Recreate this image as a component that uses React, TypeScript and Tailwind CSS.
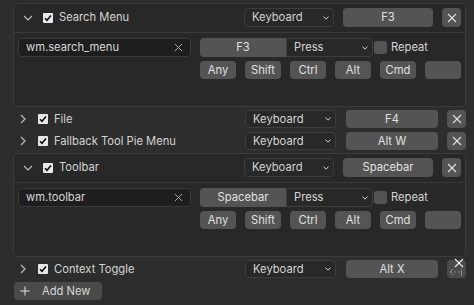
import React from "react";

const font = { fontFamily: "Inter, 'Noto Sans', sans-serif" };

function ChevronDown() {
  return (
    <svg width="10" height="6" viewBox="0 0 10 6" className="block">
      <polyline points="1,1 5,5 9,1" fill="none" stroke="#bdbdbd" strokeWidth="1.2" />
    </svg>
  );
}

function ChevronRight() {
  return (
    <svg width="6" height="10" viewBox="0 0 6 10" className="block">
      <polyline points="1,1 5,5 1,9" fill="none" stroke="#bdbdbd" strokeWidth="1.2" />
    </svg>
  );
}

function SmallChevron() {
  return (
    <svg width="6" height="4" viewBox="0 0 6 4" className="block">
      <polyline points="0.5,0.5 3,3.2 5.5,0.5" fill="none" stroke="#d0d0d0" strokeWidth="1" />
    </svg>
  );
}

function XIcon({ size = 9, color = "#d6d6d6" }: { size?: number; color?: string }) {
  return (
    <svg width={size} height={size} viewBox="0 0 10 10" className="block">
      <line x1="1" y1="1" x2="9" y2="9" stroke={color} strokeWidth="1.1" />
      <line x1="9" y1="1" x2="1" y2="9" stroke={color} strokeWidth="1.1" />
    </svg>
  );
}

function Check() {
  return (
    <div className="w-[10px] h-[10px] bg-[#e8e8e8] rounded-[1px] flex items-center justify-center">
      <svg width="8" height="8" viewBox="0 0 8 8" className="block">
        <polyline points="1,4.2 3,6.3 7,1.5" fill="none" stroke="#111" strokeWidth="1.6" />
      </svg>
    </div>
  );
}

function Dropdown({ w, label }: { w: string; label: string }) {
  return (
    <div
      className={`${w} h-full bg-[#282828] border border-[#3d3d3d] rounded-[4px] flex items-center pl-[7px] pr-[4px] text-[11.2px] text-[#d4d4d4]`}
    >
      <span className="flex-1">{label}</span>
      <SmallChevron />
    </div>
  );
}

function Btn({ w, label }: { w: string; label: string }) {
  return (
    <div
      className={`${w} h-full bg-[#545454] rounded-[4px] flex items-center justify-center text-[11.2px] text-[#e0e0e0]`}
    >
      {label}
    </div>
  );
}

function XBtn() {
  return (
    <div className="w-[19px] h-full bg-[#545454] rounded-[4px] flex items-center justify-center">
      <XIcon size={10} color="#e0e0e0" />
    </div>
  );
}

function CollapsedRow({ label, keyLabel, cursor }: { label: string; keyLabel: string; cursor?: boolean }) {
  return (
    <div className="h-[18px] flex items-center">
      <div className="w-[20px] flex justify-center">
        <ChevronRight />
      </div>
      <div className="ml-[5px]">
        <Check />
      </div>
      <span className="ml-[6px] text-[11.2px] text-[#d4d4d4]">{label}</span>
      <div className="ml-auto flex h-full items-stretch">
        <Dropdown w="w-[91px]" label="Keyboard" />
        <div className="w-[10px]" />
        <Btn w="w-[92px]" label={keyLabel} />
        <div className="w-[9px]" />
        {cursor ? (
          <div className="w-[19px] h-full bg-[#4a4a4a] rounded-[4px] relative">
            <div className="absolute left-[7px] top-[-2px]">
              <XIcon size={10} color="#f0f0f0" />
            </div>
            <svg width="16" height="8" viewBox="0 0 16 8" className="absolute left-[2px] top-[8px]">
              <polyline points="4,1 1,4 4,7" fill="none" stroke="#8a8a8a" strokeWidth="1" />
              <line x1="1" y1="4" x2="3" y2="4" stroke="#8a8a8a" strokeWidth="1" />
              <line x1="5" y1="4" x2="7" y2="4" stroke="#8a8a8a" strokeWidth="1" />
              <line x1="9" y1="4" x2="11" y2="4" stroke="#8a8a8a" strokeWidth="1" />
              <line x1="12.5" y1="1" x2="12.5" y2="8" stroke="#8a8a8a" strokeWidth="1" />
            </svg>
          </div>
        ) : (
          <XBtn />
        )}
      </div>
    </div>
  );
}

function ExpandedBox({ label, keyLabel, op }: { label: string; keyLabel: string; op: string }) {
  return (
    <div className="h-[104px] border border-[#3c3c3c] rounded-[5px] bg-[#282828] flex flex-col">
      <div className="h-[29px] px-[4px] pt-[4px] pb-[5px] border-b border-[#3a3a3a] flex items-center">
        <div className="w-[20px] flex justify-center">
          <ChevronDown />
        </div>
        <div className="ml-[5px]">
          <Check />
        </div>
        <span className="ml-[6px] text-[11.2px] text-[#d4d4d4]">{label}</span>
        <div className="ml-auto flex h-[19px] items-stretch">
          <Dropdown w="w-[90px]" label="Keyboard" />
          <div className="w-[9px]" />
          <Btn w="w-[90px]" label={keyLabel} />
          <div className="w-[9px]" />
          <XBtn />
        </div>
      </div>
      <div className="px-[4px] pt-[5px] flex">
        <div className="w-[173px] h-[19px] bg-[#1e1e1e] border border-[#3a3a3a] rounded-[4px] flex items-center pl-[7px] pr-[7px] text-[11.2px] text-[#d6d6d6]">
          <span className="flex-1">{op}</span>
          <XIcon size={9} color="#a8a8a8" />
        </div>
        <div className="ml-[9px] w-[261px] flex flex-col gap-[4px]">
          <div className="h-[19px] flex items-center">
            <div className="w-[86px] h-full bg-[#545454] rounded-l-[4px] flex items-center justify-center text-[11.2px] text-[#e0e0e0]">
              {keyLabel}
            </div>
            <div className="w-[87px] h-full bg-[#282828] border border-[#3d3d3d] rounded-r-[4px] flex items-center pl-[7px] pr-[4px] text-[11.2px] text-[#d4d4d4]">
              <span className="flex-1">Press</span>
              <SmallChevron />
            </div>
            <div className="ml-[1px] w-[13px] h-[13px] bg-[#545454] rounded-[3px]" />
            <span className="ml-[4px] text-[11.2px] text-[#d4d4d4]">Repeat</span>
          </div>
          <div className="h-[18px] flex gap-[9px]">
            {["Any", "Shift", "Ctrl", "Alt", "Cmd", ""].map((m, i) => (
              <div
                key={i}
                className="w-[36px] h-full bg-[#545454] rounded-[4px] flex items-center justify-center text-[11.2px] text-[#e0e0e0]"
              >
                {m}
              </div>
            ))}
          </div>
        </div>
      </div>
    </div>
  );
}

export default function App() {
  return (
    <div
      className="w-[474px] h-[305px] bg-[#2d2d2d] pt-[3px] pl-[13px] pr-[8px] overflow-hidden"
      style={font}
    >
      <ExpandedBox label="Search Menu" keyLabel="F3" op="wm.search_menu" />
      <div className="mt-[3px]">
        <CollapsedRow label="File" keyLabel="F4" />
      </div>
      <div className="mt-[4px]">
        <CollapsedRow label="Fallback Tool Pie Menu" keyLabel="Alt W" />
      </div>
      <div className="mt-[3px]">
        <ExpandedBox label="Toolbar" keyLabel="Spacebar" op="wm.toolbar" />
      </div>
      <div className="mt-[3px] h-[19px]">
        <div className="h-[19px]">
          <CollapsedRow label="Context Toggle" keyLabel="Alt X" cursor />
        </div>
      </div>
      <div className="mt-[3px] ml-[1px] w-[88px] h-[18px] bg-[#4a4a4a] rounded-[4px] flex items-center text-[11.2px] text-[#d6d6d6]">
        <svg width="10" height="10" viewBox="0 0 10 10" className="ml-[6px] block">
          <line x1="5" y1="0.5" x2="5" y2="9.5" stroke="#d8d8d8" strokeWidth="1.1" />
          <line x1="0.5" y1="5" x2="9.5" y2="5" stroke="#d8d8d8" strokeWidth="1.1" />
        </svg>
        <span className="ml-[12px]">Add New</span>
      </div>
    </div>
  );
}
